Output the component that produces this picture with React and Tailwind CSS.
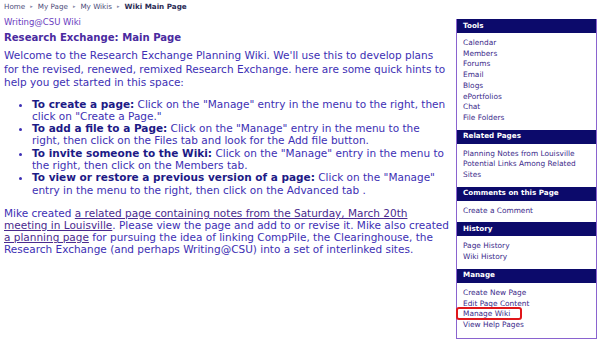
export default function App() {
  const font = { fontFamily: '"DejaVu Sans", Verdana, sans-serif' };
  const Section = ({ title, items, extra, last }) => (
    <div>
      <div className="bg-[#0c0a6b] text-white font-bold text-[7.2px] px-[6px] h-[14px] flex items-center">{title}</div>
      <div className={`px-[6px] pt-[5px] flex flex-col ${last ? "pb-[7px]" : "pb-[6px]"}`}>
        {items.map((it, i) => (
          <div key={i} className="text-[7.4px] leading-[10.7px] text-[#3b2a8a] relative">
            {it}
            {extra === i && (
              <span className="absolute left-[-7px] top-[-2px] w-[66px] h-[13px] border-2 border-[#e0161a] rounded-[3px]" />
            )}
          </div>
        ))}
      </div>
    </div>
  );
  const Sep = () => <span className="text-[5px] text-[#8a8aa8]">▸</span>;
  const B = ({ children }) => <b className="text-[#1d1a86]">{children}</b>;
  const L = ({ children }) => <span className="underline text-[#4a2a8e]">{children}</span>;
  return (
    <div className="w-[600px] h-[340px] bg-white flex overflow-hidden" style={font}>
      <div className="w-[456px] pl-[4px] pt-[1px] whitespace-nowrap">
        <div className="text-[7.2px] text-[#4d4d7a] flex items-center gap-[5px] h-[12px]">
          <span>Home</span><Sep />
          <span>My Page</span><Sep />
          <span>My Wikis</span><Sep />
          <span className="font-bold text-[#2b2b55]">Wiki Main Page</span>
        </div>
        <div className="text-[8.5px] text-[#6a3cc0] mt-[3px] leading-[13px]">Writing@CSU Wiki</div>
        <div className="text-[10.1px] font-bold text-[#4a2aa0] leading-[16px] mt-[1px]">Research Exchange: Main Page</div>
        <p className="text-[10.5px] leading-[13.5px] text-[#3d2fb4] mt-[3px]">
          Welcome to the Research Exchange Planning Wiki. We'll use this to develop plans<br />
          for the revised, renewed, remixed Research Exchange. here are some quick hints to<br />
          help you get started in this space:
        </p>
        <ul className="list-disc pl-[28px] mt-[8px] text-[10.5px] leading-[12.3px] text-[#3d2fb4]">
          <li><B>To create a page:</B> Click on the "Manage" entry in the menu to the right, then<br />click on "Create a Page."</li>
          <li><B>To add a file to a Page:</B> Click on the "Manage" entry in the menu to the<br />right, then click on the Files tab and look for the Add file button.</li>
          <li><B>To invite someone to the Wiki:</B> Click on the "Manage" entry in the menu to<br />the right, then click on the Members tab.</li>
          <li><B>To view or restore a previous version of a page:</B> Click on the "Manage"<br />entry in the menu to the right, then click on the Advanced tab .</li>
        </ul>
        <p className="text-[10.5px] leading-[12.2px] text-[#3d2fb4] mt-[11px]">
          Mike created <L>a related page containing notes from the Saturday, March 20th<br />meeting in Louisville</L>. Please view the page and add to or revise it. Mike also created<br />
          <L>a planning page</L> for pursuing the idea of linking CompPile, the Clearinghouse, the<br />
          Research Exchange (and perhaps Writing@CSU) into a set of interlinked sites.
        </p>
      </div>
      <div className="pt-[19px]">
        <div className="w-[141px] border border-[#8a63cf] border-t-0 bg-white flex flex-col">
          <Section title="Tools" items={["Calendar", "Members", "Forums", "Email", "Blogs", "ePortfolios", "Chat", "File Folders"]} />
          <Section title="Related Pages" items={["Planning Notes from Louisville", "Potential Links Among Related Sites"]} />
          <Section title="Comments on this Page" items={["Create a Comment"]} />
          <Section title="History" items={["Page History", "Wiki History"]} />
          <Section title="Manage" items={["Create New Page", "Edit Page Content", "Manage Wiki", "View Help Pages"]} extra={2} last />
        </div>
      </div>
    </div>
  );
}
